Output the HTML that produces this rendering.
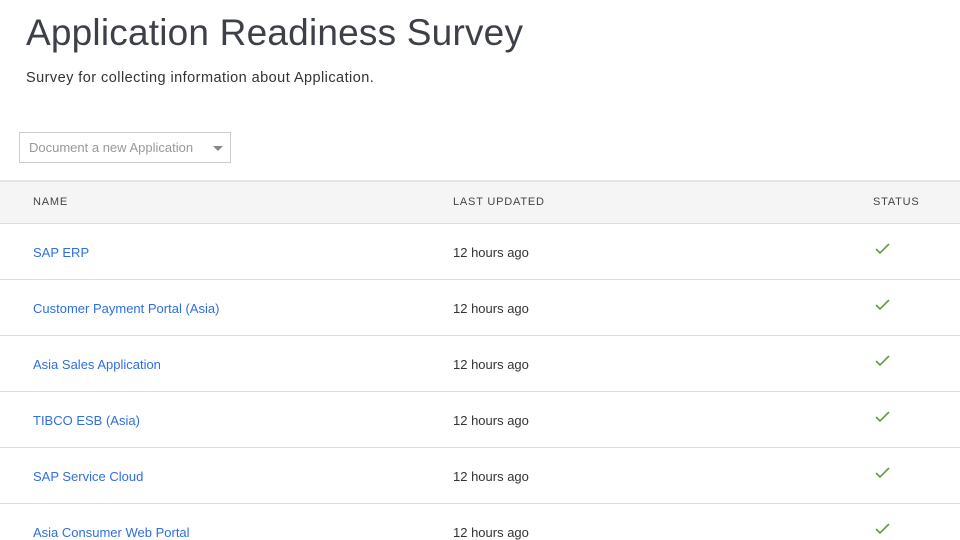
<!DOCTYPE html>
<html><head><style>
html,body{margin:0;width:960px;height:540px;overflow:hidden;background:#fff}
body{font-family:"Liberation Sans",sans-serif;color:#3d4048;position:relative}
h1{position:absolute;left:26px;top:12px;margin:0;font-weight:400;font-size:37px;letter-spacing:0.2px;color:#3d4048}
.sub{position:absolute;left:26px;top:70px;font-size:14.5px;letter-spacing:0.45px;color:#333}
.dd{position:absolute;left:19px;top:132px;border:1px solid #ccc;font-size:13px;color:#999;box-sizing:border-box;width:212px;height:31px}
.dd span{position:absolute;left:9px;top:7px}
.dd i{position:absolute;left:193px;top:13px;border-left:5px solid transparent;border-right:5px solid transparent;border-top:5px solid #888}
.hd{position:absolute;left:0;top:180px;width:960px;height:44px;background:#f5f5f5;border-top:2px solid #e5e5e5;border-bottom:1px solid #ddd;box-sizing:border-box}
.h{position:absolute;top:196px;font-size:11px;letter-spacing:0.8px;color:#444}
.row{position:absolute;left:0;width:960px;height:56px;border-bottom:1px solid #ddd;box-sizing:border-box}
.row .n{position:absolute;left:33px;top:21px;font-size:13px;color:#2f6ee0}
.row .t{position:absolute;left:453px;top:21px;font-size:13px;color:#333}
.row svg{position:absolute;left:875px;top:19px}
</style></head><body>
<h1>Application Readiness Survey</h1>
<div class="sub">Survey for collecting information about Application.</div>
<div class="dd"><span>Document a new Application</span><i></i></div>
<div class="hd"></div>
<div class="h" style="left:33px">NAME</div>
<div class="h" style="left:453px">LAST UPDATED</div>
<div class="h" style="left:873px">STATUS</div>
<div class="row" style="top:224px"><span class="n">SAP ERP</span><span class="t">12 hours ago</span><svg width="16" height="12"><path d="M1 6l4 4 9-9" fill="none" stroke="#6a9a3a" stroke-width="1.6"/></svg></div>
<div class="row" style="top:280px"><span class="n">Customer Payment Portal (Asia)</span><span class="t">12 hours ago</span><svg width="16" height="12"><path d="M1 6l4 4 9-9" fill="none" stroke="#6a9a3a" stroke-width="1.6"/></svg></div>
<div class="row" style="top:336px"><span class="n">Asia Sales Application</span><span class="t">12 hours ago</span><svg width="16" height="12"><path d="M1 6l4 4 9-9" fill="none" stroke="#6a9a3a" stroke-width="1.6"/></svg></div>
<div class="row" style="top:392px"><span class="n">TIBCO ESB (Asia)</span><span class="t">12 hours ago</span><svg width="16" height="12"><path d="M1 6l4 4 9-9" fill="none" stroke="#6a9a3a" stroke-width="1.6"/></svg></div>
<div class="row" style="top:448px"><span class="n">SAP Service Cloud</span><span class="t">12 hours ago</span><svg width="16" height="12"><path d="M1 6l4 4 9-9" fill="none" stroke="#6a9a3a" stroke-width="1.6"/></svg></div>
<div class="row" style="top:504px"><span class="n">Asia Consumer Web Portal</span><span class="t">12 hours ago</span><svg width="16" height="12"><path d="M1 6l4 4 9-9" fill="none" stroke="#6a9a3a" stroke-width="1.6"/></svg></div>
</body></html>
